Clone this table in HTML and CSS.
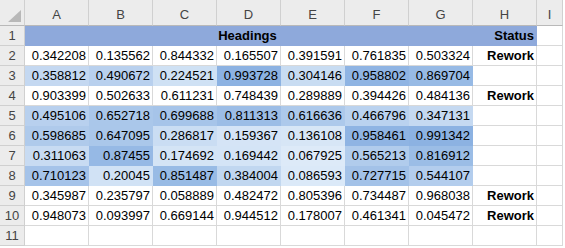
FILE: index.html
```html
<!DOCTYPE html>
<html lang="en">
<head>
  <meta charset="UTF-8">
  <title>Sheet1</title>
  <link rel="stylesheet" href="styles.css">
</head>
<body>

  <div class="sheet">
    <!-- Column headers -->
    <div class="corner"><span class="corner-mark"></span></div>
    <div class="col-head">A</div>
    <div class="col-head">B</div>
    <div class="col-head">C</div>
    <div class="col-head">D</div>
    <div class="col-head">E</div>
    <div class="col-head">F</div>
    <div class="col-head">G</div>
    <div class="col-head">H</div>
    <div class="col-head">I</div>

    <!-- Row 1 -->
    <div class="row-head">1</div>
    <div class="cell filled title-cell">Headings</div>
    <div class="cell filled bold">Status</div>
    <div class="cell"></div>

    <!-- Row 2 -->
    <div class="row-head">2</div>
    <div class="cell">0.342208</div>
    <div class="cell">0.135562</div>
    <div class="cell">0.844332</div>
    <div class="cell">0.165507</div>
    <div class="cell">0.391591</div>
    <div class="cell">0.761835</div>
    <div class="cell">0.503324</div>
    <div class="cell bold">Rework</div>
    <div class="cell"></div>

    <!-- Row 3 -->
    <div class="row-head">3</div>
    <div class="cell scale">0.358812</div>
    <div class="cell scale">0.490672</div>
    <div class="cell scale">0.224521</div>
    <div class="cell scale">0.993728</div>
    <div class="cell scale">0.304146</div>
    <div class="cell scale">0.958802</div>
    <div class="cell scale">0.869704</div>
    <div class="cell"></div>
    <div class="cell"></div>

    <!-- Row 4 -->
    <div class="row-head">4</div>
    <div class="cell">0.903399</div>
    <div class="cell">0.502633</div>
    <div class="cell">0.611231</div>
    <div class="cell">0.748439</div>
    <div class="cell">0.289889</div>
    <div class="cell">0.394426</div>
    <div class="cell">0.484136</div>
    <div class="cell bold">Rework</div>
    <div class="cell"></div>

    <!-- Row 5 -->
    <div class="row-head">5</div>
    <div class="cell scale">0.495106</div>
    <div class="cell scale">0.652718</div>
    <div class="cell scale">0.699688</div>
    <div class="cell scale">0.811313</div>
    <div class="cell scale">0.616636</div>
    <div class="cell scale">0.466796</div>
    <div class="cell scale">0.347131</div>
    <div class="cell"></div>
    <div class="cell"></div>

    <!-- Row 6 -->
    <div class="row-head">6</div>
    <div class="cell scale">0.598685</div>
    <div class="cell scale">0.647095</div>
    <div class="cell scale">0.286817</div>
    <div class="cell scale">0.159367</div>
    <div class="cell scale">0.136108</div>
    <div class="cell scale">0.958461</div>
    <div class="cell scale">0.991342</div>
    <div class="cell"></div>
    <div class="cell"></div>

    <!-- Row 7 -->
    <div class="row-head">7</div>
    <div class="cell scale">0.311063</div>
    <div class="cell scale">0.87455</div>
    <div class="cell scale">0.174692</div>
    <div class="cell scale">0.169442</div>
    <div class="cell scale">0.067925</div>
    <div class="cell scale">0.565213</div>
    <div class="cell scale">0.816912</div>
    <div class="cell"></div>
    <div class="cell"></div>

    <!-- Row 8 -->
    <div class="row-head">8</div>
    <div class="cell scale">0.710123</div>
    <div class="cell scale">0.20045</div>
    <div class="cell scale">0.851487</div>
    <div class="cell scale">0.384004</div>
    <div class="cell scale">0.086593</div>
    <div class="cell scale">0.727715</div>
    <div class="cell scale">0.544107</div>
    <div class="cell"></div>
    <div class="cell"></div>

    <!-- Row 9 -->
    <div class="row-head">9</div>
    <div class="cell">0.345987</div>
    <div class="cell">0.235797</div>
    <div class="cell">0.058889</div>
    <div class="cell">0.482472</div>
    <div class="cell">0.805396</div>
    <div class="cell">0.734487</div>
    <div class="cell">0.968038</div>
    <div class="cell bold">Rework</div>
    <div class="cell"></div>

    <!-- Row 10 -->
    <div class="row-head">10</div>
    <div class="cell">0.948073</div>
    <div class="cell">0.093997</div>
    <div class="cell">0.669144</div>
    <div class="cell">0.944512</div>
    <div class="cell">0.178007</div>
    <div class="cell">0.461341</div>
    <div class="cell">0.045472</div>
    <div class="cell bold">Rework</div>
    <div class="cell"></div>

    <!-- Row 11 -->
    <div class="row-head">11</div>
    <div class="cell"></div>
    <div class="cell"></div>
    <div class="cell"></div>
    <div class="cell"></div>
    <div class="cell"></div>
    <div class="cell"></div>
    <div class="cell"></div>
    <div class="cell"></div>
    <div class="cell"></div>
  </div>

  <script>
    // Two-colour scale, like Excel's conditional formatting
    const scaled = document.querySelectorAll('.scale');
    const values = Array.from(scaled, cell => parseFloat(cell.textContent));
    const min = Math.min(...values);
    const max = Math.max(...values);
    const low = [221, 234, 248];
    const high = [140, 178, 226];

    scaled.forEach((cell, i) => {
      const t = (values[i] - min) / (max - min);
      const rgb = low.map((c, k) => Math.round(c + (high[k] - c) * t));
      cell.style.backgroundColor = 'rgb(' + rgb.join(',') + ')';
    });
  </script>

</body>
</html>
```

FILE: styles.css
```css
* {
  margin: 0;
  padding: 0;
  box-sizing: border-box;
}

body {
  background-color: #ffffff;
  font-family: "Liberation Sans", Arial, sans-serif;
  font-size: 13px;
  color: #000000;
}

.sheet {
  display: grid;
  grid-template-columns: 25px repeat(8, 64px) 26px;
  grid-template-rows: 26px repeat(11, 20px);
  width: 563px;
  border-right: 1px solid #bdbdbd;
}

/* Headers */
.corner,
.col-head,
.row-head {
  background-color: #ececec;
  color: #444444;
  border-right: 1px solid #d0d0d0;
  border-bottom: 1px solid #d0d0d0;
}

.corner {
  display: flex;
  justify-content: flex-end;
  align-items: flex-end;
  padding: 0 3px 3px 0;
  border-bottom-color: #b9b9b9;
}

.corner-mark {
  width: 13px;
  height: 12px;
  background-color: #b8b8b8;
  clip-path: polygon(100% 0, 100% 100%, 0 100%);
}

.col-head {
  display: flex;
  justify-content: center;
  align-items: center;
  padding-top: 3px;
  border-bottom-color: #b9b9b9;
}

.row-head {
  display: flex;
  justify-content: center;
  align-items: flex-end;
  line-height: 14px;
  padding-bottom: 2px;
}

/* Cells */
.cell {
  display: flex;
  justify-content: flex-end;
  align-items: flex-end;
  line-height: 14px;
  padding: 0 2px 2px 0;
  border-right: 1px solid #d9d9d9;
  border-bottom: 1px solid #d9d9d9;
  white-space: nowrap;
}

.cell.scale {
  border-color: transparent;
}

.filled {
  background-color: #8ea9db;
  border-color: transparent;
  font-weight: bold;
}

.title-cell {
  grid-column: span 7;
  justify-content: center;
}

.bold {
  font-weight: bold;
}
```
